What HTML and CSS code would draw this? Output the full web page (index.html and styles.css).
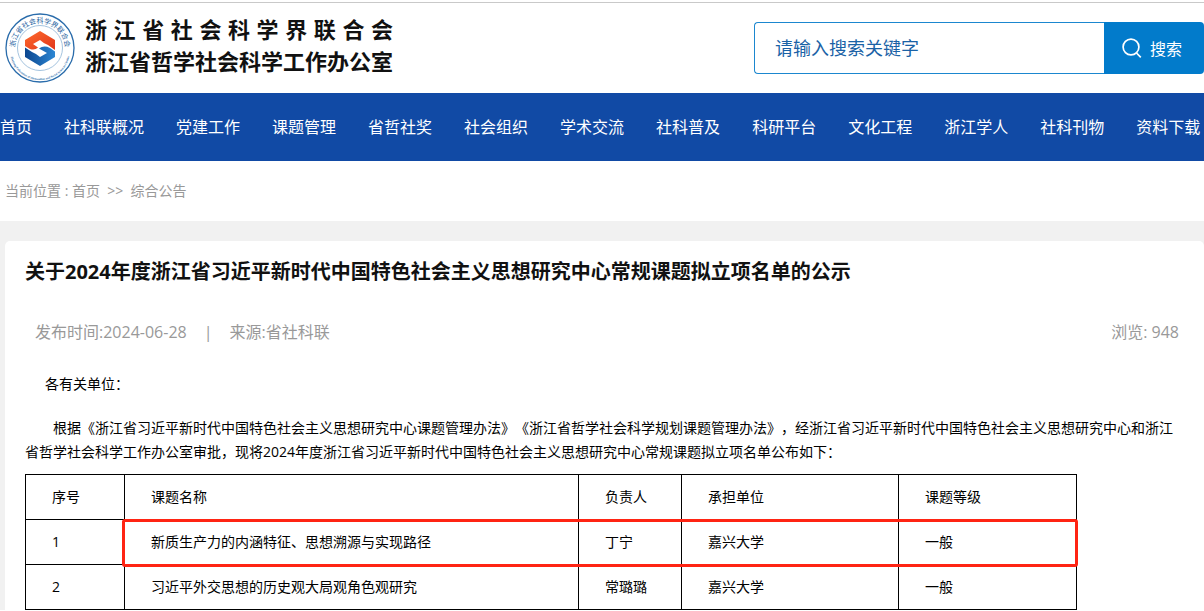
FILE: index.html
```html
<!DOCTYPE html>
<html lang="zh-CN">
<head>
    <meta charset="UTF-8">
    <meta name="viewport" content="width=device-width, initial-scale=1.0">
    <title>综合公告</title>
    <link rel="stylesheet" href="styles.css">
</head>
<body>
    <!-- 头部 -->
    <header class="header">
        <a class="logo" href="#">
            <svg class="logo-img" viewBox="0 0 70 70" width="70" height="70">
                <defs>
                    <path id="arcTop" d="M11.6 44 A25 25 0 1 1 58.4 44"/>
                    <path id="arcBottom" d="M5 37 A30 30 0 0 0 65 37"/>
                    <linearGradient id="orange" x1="0" y1="0" x2="1" y2="1">
                        <stop offset="0" stop-color="#ff6a2c"/>
                        <stop offset="1" stop-color="#e0361b"/>
                    </linearGradient>
                    <linearGradient id="blue" x1="0" y1="0" x2="1" y2="0">
                        <stop offset="0" stop-color="#0c4790"/>
                        <stop offset="1" stop-color="#2b86d3"/>
                    </linearGradient>
                </defs>
                <circle cx="35" cy="35" r="34" fill="#fff" stroke="#2a6cab" stroke-width="1.3"/>
                <circle cx="35" cy="35" r="22.5" fill="#fff" stroke="#8db4d6" stroke-width=".8"/>
                <text class="logo-cn"><textPath href="#arcTop" startOffset="50%" text-anchor="middle">浙江省社会科学界联合会</textPath></text>
                <text class="logo-en"><textPath href="#arcBottom" startOffset="50%" text-anchor="middle">Zhejiang Federation of Humanities and Social Sciences Circles</textPath></text>
                <path d="M35 18 L50 27 V37 L43 32 Q38 30 35 27 L28 31 L33 34.5 Q30 37.5 25 36 L20 33 V27 Z" fill="url(#orange)"/>
                <path d="M35 53 L20 44 V34.5 L27 39 Q32 41 35 44 L42 40 L34 35.5 Q39 32 45 35 L50 38.5 V44 Z" fill="url(#blue)"/>
            </svg>
            <span class="logo-text">
                <span class="logo-line">浙江省社会科学界联合会</span>
                <span class="logo-line">浙江省哲学社会科学工作办公室</span>
            </span>
        </a>
        <form class="search">
            <input class="search-input" type="text" placeholder="请输入搜索关键字" aria-label="请输入搜索关键字">
            <button class="search-btn" type="button">
                <svg width="20" height="20" viewBox="0 0 20 20" fill="none" stroke="#fff" stroke-width="1.7">
                    <circle cx="9" cy="9" r="7.9"/>
                    <path d="M14.5 15 L18.8 19.3"/>
                </svg>
                <span>搜索</span>
            </button>
        </form>
    </header>

    <!-- 导航 -->
    <nav class="nav">
        <ul>
            <li><a href="#">首页</a></li>
            <li><a href="#">社科联概况</a></li>
            <li><a href="#">党建工作</a></li>
            <li><a href="#">课题管理</a></li>
            <li><a href="#">省哲社奖</a></li>
            <li><a href="#">社会组织</a></li>
            <li><a href="#">学术交流</a></li>
            <li><a href="#">社科普及</a></li>
            <li><a href="#">科研平台</a></li>
            <li><a href="#">文化工程</a></li>
            <li><a href="#">浙江学人</a></li>
            <li><a href="#">社科刊物</a></li>
            <li><a href="#">资料下载</a></li>
        </ul>
    </nav>

    <!-- 当前位置 -->
    <div class="crumb">当前位置 : <a href="#">首页</a> &nbsp;&gt;&gt;&nbsp; <a href="#">综合公告</a></div>

    <!-- 正文 -->
    <div class="main">
        <main class="article">
            <h1>关于2024年度浙江省习近平新时代中国特色社会主义思想研究中心常规课题拟立项名单的公示</h1>
            <div class="info">
                <span>发布时间:2024-06-28</span>
                <span>|</span>
                <span>来源:省社科联</span>
                <span class="views">浏览: 948</span>
            </div>
            <p class="hello">各有关单位：</p>
            <p class="text">根据《浙江省习近平新时代中国特色社会主义思想研究中心课题管理办法》《浙江省哲学社会科学规划课题管理办法》，经浙江省习近平新时代中国特色社会主义思想研究中心和浙江省哲学社会科学工作办公室审批，现将2024年度浙江省习近平新时代中国特色社会主义思想研究中心常规课题拟立项名单公布如下：</p>
            <table class="list">
                <colgroup>
                    <col class="c-no">
                    <col class="c-name">
                    <col class="c-person">
                    <col class="c-unit">
                    <col class="c-level">
                </colgroup>
                <tr>
                    <th>序号</th>
                    <th>课题名称</th>
                    <th>负责人</th>
                    <th>承担单位</th>
                    <th>课题等级</th>
                </tr>
                <tr class="mark">
                    <td>1</td>
                    <td>新质生产力的内涵特征、思想溯源与实现路径</td>
                    <td>丁宁</td>
                    <td>嘉兴大学</td>
                    <td>一般</td>
                </tr>
                <tr>
                    <td>2</td>
                    <td>习近平外交思想的历史观大局观角色观研究</td>
                    <td>常璐璐</td>
                    <td>嘉兴大学</td>
                    <td>一般</td>
                </tr>
            </table>
        </main>
    </div>
</body>
</html>
```
FILE: styles.css
```css
*{
    box-sizing: border-box;
}
body,h1,p,ul,li{
    margin: 0px;
    padding: 0px;
    list-style: none;
}
body{
    padding-top: 2px;
    background-color: #fff;
    font-family: "Microsoft YaHei", "Open Sans", "Noto Sans CJK SC", sans-serif;
    font-size: 14px;
    color: #000;
    text-spacing-trim: space-all;
}
a{
    color: inherit;
    text-decoration: none;
}
/* 头部 */
.header{
    display: flex;
    justify-content: space-between;
    align-items: center;
    height: 91px;
    padding-left: 5px;
    border-top: 1px solid #c9c9c9;
}
.logo{
    display: flex;
    align-items: center;
    gap: 10px;
}
.logo-cn{
    font-size: 7px;
    fill: #1f5f9f;
}
.logo-en{
    font-family: "Liberation Serif", serif;
    font-size: 3px;
    font-weight: bold;
    fill: #2a6cab;
}
.logo-text{
    width: 308px;
    padding-bottom: 6px;
}
.logo-line{
    display: block;
    height: 32px;
    line-height: 32px;
    font-size: 22px;
    font-weight: bold;
    color: #111;
    white-space: nowrap;
    text-align: justify;
    text-align-last: justify;
}
.search{
    display: flex;
    width: 450px;
    height: 52px;
}
.search-input{
    flex: 1;
    min-width: 0;
    padding: 0 20px;
    border: 1px solid #1b87cf;
    border-right: 0;
    border-radius: 4px 0 0 4px;
    font-family: inherit;
    font-size: 18px;
    color: #1a62a6;
    outline: none;
}
.search-input::placeholder{
    color: #1a62a6;
}
.search-btn{
    display: flex;
    align-items: center;
    justify-content: center;
    gap: 8px;
    width: 100px;
    padding: 0 4px 0 0;
    border: 0;
    border-radius: 0 4px 4px 0;
    background-color: #027bcb;
    font-family: inherit;
    font-size: 16px;
    color: #fff;
    cursor: pointer;
}
/* 导航 */
.nav{
    background-color: #114aa5;
}
.nav ul{
    display: flex;
    gap: 32px;
}
.nav a{
    display: block;
    line-height: 68px;
    font-size: 16px;
    color: #fff;
    white-space: nowrap;
}
.nav a:hover{
    color: #ffe08a;
}
/* 当前位置 */
.crumb{
    padding-left: 5px;
    line-height: 60px;
    color: #999;
}
/* 正文 */
.main{
    padding: 20px 0 0 5px;
    background-color: #f1f1f1;
}
.article{
    padding: 14px 20px 0;
    border-radius: 5px 5px 0 0;
    background-color: #fff;
}
.article h1{
    line-height: 34px;
    font-size: 20px;
    color: #111;
}
.info{
    display: flex;
    gap: 17px;
    margin-top: 28px;
    padding: 0 5px 0 10px;
    line-height: 30px;
    font-size: 16px;
    color: #999;
}
.info .views{
    margin-left: auto;
}
.hello{
    margin-top: 25px;
    padding-left: 20px;
    line-height: 24px;
}
.text{
    margin-top: 20px;
    line-height: 24px;
    text-indent: 2em;
}
/* 名单表格 */
.list{
    width: 1052px;
    max-width: 100%;
    margin-top: 10px;
    border-collapse: collapse;
    table-layout: fixed;
}
.list th,
.list td{
    height: 45px;
    padding: 0 26px 2px;
    border: 1px solid #000;
    font-weight: normal;
    text-align: left;
}
.c-no{
    width: 99px;
}
.c-name{
    width: 454px;
}
.c-person{
    width: 103px;
}
.c-unit{
    width: 217px;
}
.c-level{
    width: 178px;
}
/* 红框标记 */
.mark{
    position: relative;
}
.mark::after{
    content: "";
    position: absolute;
    top: -1px;
    right: -1px;
    bottom: -2px;
    left: 96px;
    border: 3px solid #ff2413;
    border-radius: 3px;
}
```
